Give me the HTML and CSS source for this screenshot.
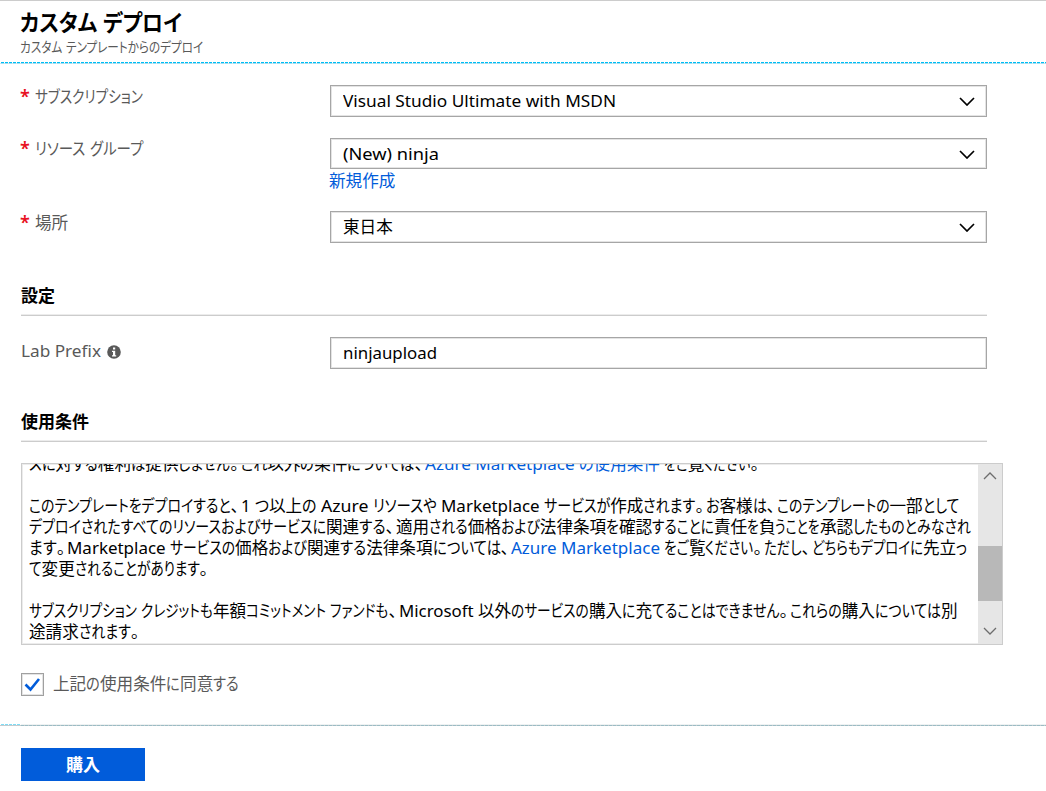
FILE: index.html
```html
<!DOCTYPE html>
<html lang="ja">
<head>
<meta charset="utf-8">
<title>カスタム デプロイ</title>
<link rel="stylesheet" href="styles.css">
</head>
<body>
<header class="header">
  <h1 class="title"><span data-w="162">カスタム デプロイ</span></h1>
  <p class="subtitle"><span data-w="183">カスタム テンプレートからのデプロイ</span></p>
  <svg class="dash" width="1046" height="2"><path d="M0 1.5H1046" stroke="#d8e4e8"/><path d="M1 .5H1046" stroke="#00bcf2" stroke-dasharray="3 1"/><path d="M1 1.5H1046" stroke="#9fe0f5" stroke-dasharray="3 1"/></svg>
</header>
<main class="form">
  <div class="row row-sub">
    <label class="label"><b class="req">*</b><span data-w="108">サブスクリプション</span></label>
    <div class="select"><span data-w="273">Visual Studio Ultimate with MSDN</span><svg class="chev" width="16" height="9" viewBox="0 0 16 9"><path d="M1 1l7 7 7-7"/></svg></div>
  </div>
  <div class="row row-group">
    <label class="label"><b class="req">*</b><span data-w="108">リソース グループ</span></label>
    <div class="field">
      <div class="select short"><span data-w="96">(New) ninja</span><svg class="chev" width="16" height="9" viewBox="0 0 16 9"><path d="M1 1l7 7 7-7"/></svg></div>
      <a class="link create">新規作成</a>
    </div>
  </div>
  <div class="row row-place">
    <label class="label"><b class="req">*</b><span>場所</span></label>
    <div class="select"><span>東日本</span><svg class="chev" width="16" height="9" viewBox="0 0 16 9"><path d="M1 1l7 7 7-7"/></svg></div>
  </div>
  <h2 class="section">設定</h2>
  <div class="row row-prefix">
    <label class="label prefix"><span data-w="80">Lab Prefix</span><svg class="info" width="14" height="14" viewBox="0 0 14 14"><circle cx="7" cy="7" r="6.8" fill="#595959"/><path d="M6 2.6h2.2v2H6zM5 5.7h3.2v4.5h1v1.2H5v-1.2h1V6.9H5z" fill="#fff"/></svg></label>
    <div class="select"><span data-w="94">ninjaupload</span></div>
  </div>
  <h2 class="section">使用条件</h2>
  <div class="terms">
    <div class="text">
      <p><span data-w="396">スに対する権利は提供しません。これ以外の条件については、</span><a class="link"><span data-w="154">Azure Marketplace </span><span data-w="81">の使用条件</span></a><span data-w="101"> をご覧ください。</span></p>
      <p class="gap"><span data-w="212">このテンプレートをデプロイすると、</span><span data-w="80">1 つ以上の </span><span data-w="52">Azure </span><span data-w="68">リソースや </span><span data-w="103">Marketplace </span><span data-w="162">サービスが作成されます。</span><span data-w="71">お客様は、</span><span data-w="182">このテンプレートの一部として</span></p>
      <p><span data-w="297">デプロイされたすべてのリソースおよびサービスに</span><span data-w="70">関連する、</span><span data-w="223">適用される価格および法律条項を</span><span data-w="95">確認することに</span><span data-w="106">責任を負うことを</span><span data-w="151">承認したものとみなされ</span></p>
      <p><span data-w="38">ます。</span><span data-w="103">Marketplace </span><span data-w="137">サービスの価格および</span><span data-w="204">関連する法律条項については、</span><a class="link" data-w="149">Azure Marketplace</a><span data-w="104"> をご覧ください。</span><span data-w="159">ただし、どちらもデプロイに</span><span data-w="44">先立っ</span></p>
      <p><span data-w="181">て変更されることがあります。</span></p>
      <p class="gap"><span data-w="184">サブスクリプション クレジットも</span><span data-w="186">年額コミットメント ファンドも、</span><span data-w="79">Microsoft </span><span data-w="111">以外のサービスの</span><span data-w="201">購入に充てることはできません。</span><span data-w="151">これらの購入については</span><span>別</span></p>
      <p><span data-w="112">途請求されます。</span></p>
    </div>
    <div class="scrollbar">
      <svg width="14" height="9" viewBox="0 0 14 9"><path d="M1 8l6-6 6 6"/></svg>
      <div class="thumb"></div>
      <svg width="14" height="9" viewBox="0 0 14 9"><path d="M1 1l6 6 6-6"/></svg>
    </div>
  </div>
  <div class="agree">
    <span class="check"><svg width="17" height="15" viewBox="0 0 17 15"><path d="M1.5 7.5l5 5L15 2"/></svg></span>
    <span class="agree-text" data-w="186">上記の使用条件に同意する</span>
  </div>
</main>
<footer class="footer">
  <svg class="dash" width="1046" height="2"><path d="M0 1.5H1046" stroke="#c4cbce"/><path d="M21 .5H1046" stroke="#eef2f3"/><path d="M21 1.5H1046" stroke="#9bbcc4" stroke-dasharray="3 1"/><path d="M1 .5H21" stroke="#7fdcf5" stroke-dasharray="3 1"/></svg>
  <button class="buy">購入</button>
</footer>
<script src="fit.js"></script>
</body>
</html>
```
FILE: styles.css
```css
* { box-sizing: border-box; }
body {
  margin: 0;
  width: 1046px;
  height: 791px;
  overflow: hidden;
  background: #fff;
  color: #000;
  font: 16.6px/21px "Noto Sans", "Noto Sans CJK JP", sans-serif;
  font-feature-settings: "palt";
}
h1, h2, p { margin: 0; }
[data-w] { white-space: pre; }
.squeeze { display: inline-block; transform-origin: 0 50%; }
.mark { letter-spacing: 2px; }
.header {
  height: 64px;
  border-top: 1px solid #ccc;
  display: flex;
  flex-direction: column;
}
.title { margin: 8px 0 0 20px; font-size: 22.5px; line-height: 28px; font-weight: 700; }
.subtitle { margin: 1px 0 0 20px; font-size: 14px; line-height: 17px; color: #595959; }
.dash { display: block; margin-top: auto; flex: none; }
.form { padding: 21px 0 0 21px; }
.row { display: grid; grid-template-columns: 309px 657px; align-items: start; }
.row-sub { height: 53px; }
.row-group { height: 73px; }
.row-place { height: 75px; }
.row-prefix { height: 75px; }
.label { display: flex; align-items: center; height: 23px; color: #595959; }
.row-group .label { height: 21px; }
.prefix { height: 26px; }
.req { width: 14px; color: #e81123; font-size: 18px; font-weight: 600; text-indent: -1px; }
.info { margin: 4px 0 0 6px; }
.select {
  display: flex;
  align-items: center;
  justify-content: space-between;
  height: 32px;
  padding: 0 11px 2px 12px;
  border: 1px solid #a6a6a6;
  box-shadow: inset 0 0 0 1px #e4e4e4;
}
.short { height: 31px; padding-bottom: 1px; }
.chev { margin-top: 2px; fill: none; stroke: #000; stroke-width: 1.7; }
.link { color: #015cda; }
.create { display: block; margin: 1px 0 0 -1px; }
.section {
  width: 966px;
  height: 30px;
  margin-bottom: 21px;
  border-bottom: 1px solid #ccc;
  box-shadow: inset 0 -1px #ececec;
  font-size: 17px;
  line-height: 20px;
}
.terms {
  display: flex;
  width: 982px;
  height: 182px;
  border: 1px solid #ccc;
  box-shadow: inset 0 0 0 1px #ececec;
  overflow: hidden;
}
.text { flex: 1; padding-left: 7px; margin-top: -11px; white-space: nowrap; }
.text p { height: 21px; }
.text .gap { margin-top: 21px; }
.scrollbar {
  width: 24px;
  background: #e6e6e6;
  display: flex;
  flex-direction: column;
  align-items: center;
  padding: 7px 0 8px;
}
.scrollbar svg { flex: none; fill: none; stroke: #6d6d6d; stroke-width: 1.3; }
.thumb { width: 24px; height: 55px; margin: 66px 0 auto; background: #b8b8b8; }
.agree { display: flex; align-items: center; gap: 9px; margin-top: 28px; height: 23px; color: #595959; }
.agree-text { margin-top: -2px; }
.check {
  display: flex;
  align-items: center;
  justify-content: center;
  width: 23px;
  height: 23px;
  border: 1px solid #a0a0a0;
  box-shadow: inset 0 0 0 1px #e4e4e4;
}
.check svg { fill: none; stroke: #015cda; stroke-width: 2.6; }
.footer { padding-top: 28px; }
.buy {
  display: block;
  width: 124px;
  height: 33px;
  margin: 22px 0 0 21px;
  padding: 0;
  border: 0;
  background: #015cda;
  color: #fff;
  font: 700 17px/33px "Noto Sans", "Noto Sans CJK JP", sans-serif;
}
```
FILE: fit.js
```javascript
const kana = /([\u3040-\u30ff]+)/;
for (const run of document.querySelectorAll("[data-w]")) {
  const parts = run.textContent.split(/([\u3040-\u30ff]+|[\u3001\u3002])/).filter(Boolean);
  run.textContent = "";
  const spans = parts.map((part) => {
    const span = document.createElement("span");
    span.textContent = part;
    if (/[\u3001\u3002]/.test(part)) span.className = "mark";
    run.append(span);
    return span;
  });
  const kanaSpans = spans.filter((span) => kana.test(span.textContent));
  const targets = kanaSpans.length ? kanaSpans : spans;
  const widths = targets.map((span) => span.getBoundingClientRect().width);
  const natural = widths.reduce((sum, width) => sum + width, 0);
  const total = spans.reduce((sum, span) => sum + span.getBoundingClientRect().width, 0);
  const scale = (Number(run.dataset.w) - (total - natural)) / natural;
  targets.forEach((span, i) => {
    span.className = "squeeze";
    span.style.width = widths[i] * scale + "px";
    span.style.transform = `scaleX(${scale})`;
  });
}
```
